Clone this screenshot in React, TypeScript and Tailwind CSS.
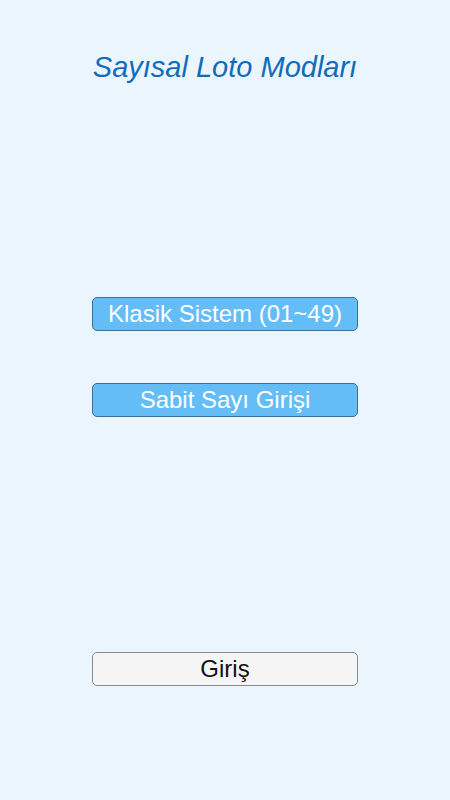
import React from "react";

function ModeButton({ label, light }: { label: string; light?: boolean }) {
  return (
    <button
      className={
        light
          ? "w-[266px] h-[34px] rounded-[5px] border border-[#8a8a8a] bg-[#f5f5f5] text-[#111] text-[24px] leading-none"
          : "w-[266px] h-[34px] rounded-[5px] border border-[#3f6f98] bg-[#64bdf6] text-white text-[24px] leading-none"
      }
    >
      {label}
    </button>
  );
}

export default function App() {
  return (
    <div className="w-[450px] h-[800px] bg-[#ebf5fe] flex flex-col items-center font-['Liberation_Sans',Arial,sans-serif]">
      <h1 className="mt-[50px] h-[34px] text-[29px] leading-[34px] italic text-[#0f6cbd]">
        Sayısal Loto Modları
      </h1>
      <div className="mt-[213px] flex flex-col gap-[52px]">
        <ModeButton label="Klasik Sistem (01~49)" />
        <ModeButton label="Sabit Sayı Girişi" />
      </div>
      <div className="mt-[235px]">
        <ModeButton label="Giriş" light />
      </div>
    </div>
  );
}
